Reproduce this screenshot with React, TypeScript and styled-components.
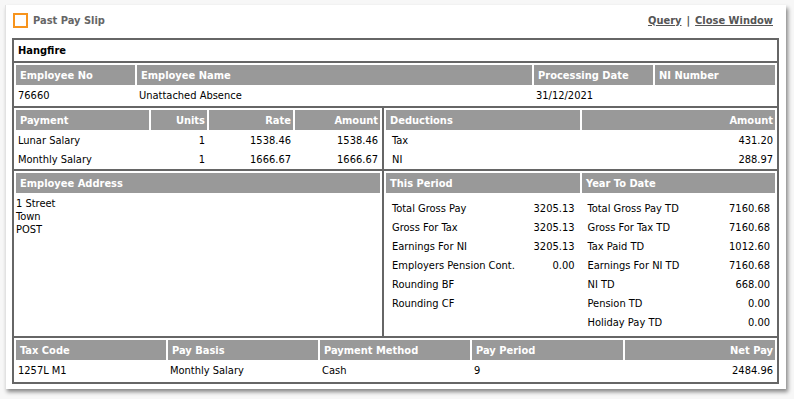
import React from "react";
import styled, { createGlobalStyle } from "styled-components";

const Global = createGlobalStyle`
  html, body { margin: 0; padding: 0; background: #f7f7f7; }
  body { font-family: "DejaVu Sans Condensed", "DejaVu Sans", sans-serif; font-size: 11px; color: #000; }
  * { box-sizing: border-box; }
`;

const Page = styled.div`
  padding: 5px 8px 0 5px;
  width: 794px;
  height: 399px;
`;

const Window = styled.div`
  width: 781px;
  height: 384px;
  background: #fff;
  border-left: 1px solid #e2e2e2;
  box-shadow: 2px 3px 4px rgba(0, 0, 0, 0.45);
  padding: 0 6px 0 6px;
`;

const TitleBar = styled.div`
  height: 33px;
  display: flex;
  align-items: center;
  justify-content: space-between;
  padding: 0 7px 2px 1px;
`;

const TitleLeft = styled.div`
  display: flex;
  align-items: center;
  gap: 5px;
`;

const Check = styled.span`
  width: 15px;
  height: 15px;
  border: 2px solid #f7941d;
  background: #fff;
  display: inline-block;
`;

const Title = styled.span`
  font-weight: bold;
  color: #666;
  font-size: 11px;
`;

const Links = styled.div`
  display: flex;
  align-items: center;
  gap: 5px;
  color: #555;
  font-weight: bold;
`;

const LinkText = styled.a`
  color: #555;
  text-decoration: underline;
  cursor: pointer;
`;

const Slip = styled.div`
  border: 2px solid #666;
  width: 767px;
`;

const CompanyRow = styled.div`
  height: 23px;
  border-bottom: 2px solid #666;
  padding: 0 4px;
  display: flex;
  align-items: center;
  font-weight: bold;
`;

const Section = styled.div<{ $last?: boolean }>`
  padding: 2px 2px ${(p) => (p.$last ? 2 : 1)}px 2px;
  border-bottom: ${(p) => (p.$last ? "none" : "2px solid #666")};
`;

const Split = styled.div`
  display: grid;
  grid-template-columns: 370px 1fr;
  border-bottom: 2px solid #666;
`;

const Half = styled.div<{ $pb?: number }>`
  padding: 2px 2px ${(p) => p.$pb ?? 0}px 2px;
  &:first-child { border-right: 2px solid #666; }
`;

const Grid = styled.div<{ $cols: string }>`
  display: grid;
  grid-template-columns: ${(p) => p.$cols};
  column-gap: 2px;
  row-gap: 0;
`;

const Head = styled.div<{ $right?: boolean }>`
  height: 20px;
  background: #999;
  color: #fff;
  font-weight: bold;
  display: flex;
  align-items: center;
  justify-content: ${(p) => (p.$right ? "flex-end" : "flex-start")};
  padding: 0 2px 0 4px;
  margin-bottom: 1px;
  white-space: nowrap;
  overflow: hidden;
`;

const Cell = styled.div<{ $right?: boolean; $pl?: number }>`
  height: 19px;
  display: flex;
  align-items: center;
  justify-content: ${(p) => (p.$right ? "flex-end" : "flex-start")};
  padding: 0 2px 0 ${(p) => p.$pl ?? 2}px;
  white-space: nowrap;
`;

const Address = styled.div`
  padding: 3px 0 0 0;
  line-height: 13px;
`;

const Figures = styled.div`
  display: grid;
  grid-template-columns: 1fr 1fr;
  column-gap: 2px;
  padding-top: 5px;
`;

const FigureList = styled.div`
  display: flex;
  flex-direction: column;
  padding: 0 5px 0 6px;
`;

const FigureRow = styled.div`
  height: 19px;
  display: flex;
  align-items: center;
  justify-content: space-between;
  white-space: nowrap;
`;

const thisPeriod: [string, string][] = [
  ["Total Gross Pay", "3205.13"],
  ["Gross For Tax", "3205.13"],
  ["Earnings For NI", "3205.13"],
  ["Employers Pension Cont.", "0.00"],
  ["Rounding BF", ""],
  ["Rounding CF", ""],
];

const ytd: [string, string][] = [
  ["Total Gross Pay TD", "7160.68"],
  ["Gross For Tax TD", "7160.68"],
  ["Tax Paid TD", "1012.60"],
  ["Earnings For NI TD", "7160.68"],
  ["NI TD", "668.00"],
  ["Pension TD", "0.00"],
  ["Holiday Pay TD", "0.00"],
];

export default function App() {
  return (
    <Page>
      <Global />
      <Window>
        <TitleBar>
          <TitleLeft>
            <Check />
            <Title>Past Pay Slip</Title>
          </TitleLeft>
          <Links>
            <LinkText>Query</LinkText>
            <span>|</span>
            <LinkText>Close Window</LinkText>
          </Links>
        </TitleBar>
        <Slip>
          <CompanyRow>Hangfire</CompanyRow>
          <Section>
            <Grid $cols="119px 395px 119px 1fr">
              <Head>Employee No</Head>
              <Head>Employee Name</Head>
              <Head>Processing Date</Head>
              <Head>NI Number</Head>
              <Cell>76660</Cell>
              <Cell>Unattached Absence</Cell>
              <Cell>31/12/2021</Cell>
              <Cell></Cell>
            </Grid>
          </Section>
          <Split>
            <Half>
              <Grid $cols="133px 56px 84px 1fr">
                <Head>Payment</Head>
                <Head $right>Units</Head>
                <Head $right>Rate</Head>
                <Head $right>Amount</Head>
                <Cell>Lunar Salary</Cell>
                <Cell $right>1</Cell>
                <Cell $right>1538.46</Cell>
                <Cell $right>1538.46</Cell>
                <Cell>Monthly Salary</Cell>
                <Cell $right>1</Cell>
                <Cell $right>1666.67</Cell>
                <Cell $right>1666.67</Cell>
              </Grid>
            </Half>
            <Half>
              <Grid $cols="194px 1fr">
                <Head>Deductions</Head>
                <Head $right>Amount</Head>
                <Cell $pl={6}>Tax</Cell>
                <Cell $right>431.20</Cell>
                <Cell $pl={6}>NI</Cell>
                <Cell $right>288.97</Cell>
              </Grid>
            </Half>
          </Split>
          <Split>
            <Half>
              <Head>Employee Address</Head>
              <Address>
                1 Street
                <br />
                Town
                <br />
                POST
              </Address>
            </Half>
            <Half $pb={4}>
              <Grid $cols="194px 1fr">
                <Head>This Period</Head>
                <Head>Year To Date</Head>
              </Grid>
              <Figures>
                <FigureList>
                  {thisPeriod.map(([k, v]) => (
                    <FigureRow key={k}>
                      <span>{k}</span>
                      <span>{v}</span>
                    </FigureRow>
                  ))}
                </FigureList>
                <FigureList>
                  {ytd.map(([k, v]) => (
                    <FigureRow key={k}>
                      <span>{k}</span>
                      <span>{v}</span>
                    </FigureRow>
                  ))}
                </FigureList>
              </Figures>
            </Half>
          </Split>
          <Section $last>
            <Grid $cols="150px 150px 150px 151px 1fr">
              <Head>Tax Code</Head>
              <Head>Pay Basis</Head>
              <Head>Payment Method</Head>
              <Head>Pay Period</Head>
              <Head $right>Net Pay</Head>
              <Cell>1257L M1</Cell>
              <Cell>Monthly Salary</Cell>
              <Cell>Cash</Cell>
              <Cell>9</Cell>
              <Cell $right>2484.96</Cell>
            </Grid>
          </Section>
        </Slip>
      </Window>
    </Page>
  );
}
